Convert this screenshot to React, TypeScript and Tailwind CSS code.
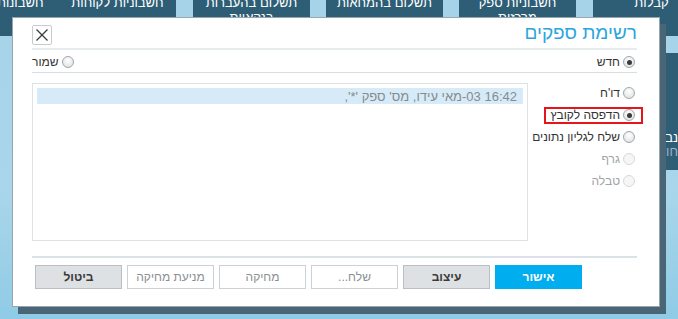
import React from "react";

const font = "font-['Liberation_Sans',Arial,'DejaVu_Sans',sans-serif]";

const tabs = [
    { label: "קבלות", x: 593 },
    { label: "חשבוניות ספק מרכזות", x: 459 },
    { label: "תשלום בהמחאות", x: 326 },
    { label: "תשלום בהעברות בנקאיות", x: 193 },
    { label: "חשבוניות לקוחות", x: 59 },
    { label: "חשבונות ספקים", x: -58 },
];

function Radio({ checked, disabled }: { checked?: boolean; disabled?: boolean }) {
    return (
        <span
            className={`flex h-[12px] w-[12px] shrink-0 items-center justify-center rounded-full border ${
                disabled
                    ? "border-[#d6d9db] bg-[#f6f6f6]"
                    : "border-[#a3a7aa] bg-[radial-gradient(circle_at_50%_35%,#ffffff,#d9dcde)]"
            }`}
        >
            {checked && <span className="h-[5px] w-[5px] rounded-full bg-[#3a3a3a]" />}
        </span>
    );
}

function RadioItem({
    label,
    checked,
    disabled,
    highlight,
}: {
    label: string;
    checked?: boolean;
    disabled?: boolean;
    highlight?: boolean;
}) {
    return (
        <div className="relative flex h-[22px] items-center gap-[3px] pr-[2px]">
            <Radio checked={checked} disabled={disabled} />
            <span className={`whitespace-nowrap text-[12px] leading-none ${disabled ? "text-[#a0a4a7]" : "text-[#333]"}`}>
                {label}
            </span>
            {highlight && (
                <span className="pointer-events-none absolute left-[-6px] right-[-6px] top-[3px] h-[17px] border-2 border-[#e8141b]" />
            )}
        </div>
    );
}

const buttons = [
    { label: "אישור", kind: "primary" },
    { label: "עיצוב", kind: "gray" },
    { label: "שלח...", kind: "off" },
    { label: "מחיקה", kind: "off" },
    { label: "מניעת מחיקה", kind: "off" },
    { label: "ביטול", kind: "gray" },
];

export default function App() {
    return (
        <div className={`relative h-[319px] w-[678px] overflow-hidden bg-[linear-gradient(180deg,#a6d3e8_0%,#a9d6ea_60%,#8fcbe6_100%)] ${font}`}>
            {/* page behind the dialog */}
            <div className="relative h-[36px]">
                {tabs.map((t) => (
                    <div
                        key={t.label}
                        className="absolute top-0 h-[36px] w-[117px] overflow-hidden bg-[#2e5e76] text-center"
                        style={{ left: t.x }}
                        dir="rtl"
                    >
                        <div className="-mt-[5px] px-[10px] text-[13px] leading-[15px] text-white">{t.label}</div>
                    </div>
                ))}
            </div>
            <div className="mt-[17px] flex justify-end">
                <div className="h-[117px] w-[40px] bg-[#2e5e76] pt-[78px] text-right" dir="rtl">
                    <div className="whitespace-nowrap text-[13px] leading-[14px] text-white">נבחרים</div>
                    <div className="whitespace-nowrap text-[13px] leading-[14px] text-[#9ab4c2]">חודש</div>
                </div>
            </div>

            {/* dialog */}
            <div
                dir="rtl"
                className="absolute left-[12px] top-[17px] flex h-[290px] w-[648px] flex-col border border-[#97a5ac] bg-white pl-[19px] pr-[22px] shadow-[6px_7px_0_#4a6676]"
            >
                <div className="flex h-[32px] shrink-0 items-end justify-between border-b-2 border-[#e6ebee] pb-[3px]">
                    <h1 className="text-[19px] font-normal leading-[24px] text-[#2ba5de]">רשימת ספקים</h1>
                    <button className="flex h-[20px] w-[20px] items-center justify-center rounded-[2px] border border-[#c5ccd0] bg-white">
                        <svg width="14" height="14" viewBox="0 0 14 14" fill="none" stroke="#3b3b3b" strokeWidth="1.3">
                            <path d="M1.5 1.5 L12.5 12.5 M12.5 1.5 L1.5 12.5" />
                        </svg>
                    </button>
                </div>

                <div className="flex h-[23px] shrink-0 items-center justify-between border-b border-[#d8dfe3] pt-[2px]">
                    <div className="flex items-center gap-[3px] pr-[2px]">
                        <Radio checked />
                        <span className="text-[12px] leading-none text-[#333]">חדש</span>
                    </div>
                    <div className="flex items-center gap-[3px]">
                        <Radio />
                        <span className="text-[12px] leading-none text-[#333]">שמור</span>
                    </div>
                </div>

                <div className="mt-[10px] flex h-[158px] shrink-0">
                    <div className="flex w-[109px] shrink-0 flex-col items-start">
                        <div className="-mt-[1px] flex flex-col items-start">
                            <RadioItem label="דו'ח" />
                            <RadioItem label="הדפסה לקובץ" checked highlight />
                            <RadioItem label="שלח לגליון נתונים" />
                            <RadioItem label="גרף" disabled />
                            <RadioItem label="טבלה" disabled />
                        </div>
                    </div>
                    <div className="w-[496px] border border-[#dde4e8] p-[4px]">
                        <div className="flex h-[16px] items-center bg-[#d6ebf7] px-[6px] text-[13px] leading-none text-[#858b8f]">
                            16:42 03-מאי עידו, מס' ספק '*',
                        </div>
                    </div>
                </div>

                <div className="mt-[15px] shrink-0 border-t-2 border-[#dbe2e5]" />

                <div className="mt-[7px] flex justify-end gap-[5px] pl-[3px]">
                    {buttons.map((b) => (
                        <button
                            key={b.label}
                            className={`flex h-[24px] w-[87px] items-center justify-center text-[12px] leading-none ${
                                b.kind === "primary"
                                    ? "bg-[#00adef] font-bold text-white"
                                    : b.kind === "gray"
                                      ? "border border-[#b9c0c5] bg-[#dde1e4] font-bold text-[#3a3a3a]"
                                      : "border border-[#cbd1d4] bg-white text-[#8a8f92]"
                            }`}
                        >
                            {b.label}
                        </button>
                    ))}
                </div>
            </div>
        </div>
    );
}
